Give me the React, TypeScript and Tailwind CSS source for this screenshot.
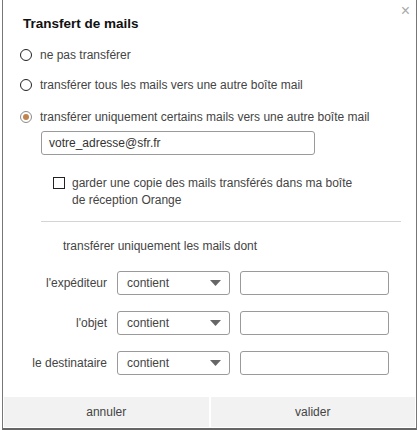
import React from "react";

const font = { fontFamily: '"Liberation Sans", Arial, sans-serif' };

function Radio({ checked = false }: { checked?: boolean }) {
  return (
    <span
      className={`flex h-[12px] w-[12px] shrink-0 items-center justify-center rounded-full border ${
        checked ? "border-[#8a8a8a]" : "border-[#222]"
      } bg-white`}
    >
      {checked && <span className="h-[6px] w-[6px] rounded-full bg-[#c0844f]" />}
    </span>
  );
}

function Select() {
  return (
    <div className="flex h-[24px] w-[113px] items-center justify-between rounded-[3px] border border-[#9a9a9a] bg-white pl-[9px] pr-[8px] text-[12px] text-[#444]">
      <span>contient</span>
      <svg width="11" height="6" viewBox="0 0 11 6">
        <path d="M0 0 H11 L5.5 6 Z" fill="#666" />
      </svg>
    </div>
  );
}

function FilterRow({ label }: { label: string }) {
  return (
    <div className="flex items-center">
      <span className="w-[84px] text-right text-[12px] text-[#444]">{label}</span>
      <div className="ml-[10px]">
        <Select />
      </div>
      <div className="ml-[10px] h-[24px] w-[149px] rounded-[3px] border border-[#9a9a9a] bg-white" />
    </div>
  );
}

export default function App() {
  return (
    <div className="h-[430px] w-[420px] bg-white" style={font}>
      <div className="relative ml-[2px] flex h-[430px] w-[415px] flex-col border-x border-b-2 border-x-[#777] border-b-[#666] bg-white">
        <span className="absolute right-[6px] top-[3px] text-[16px] leading-none text-[#aaa]">×</span>

        <div className="pl-[17px]">
          <h1 className="ml-[3px] mt-[15px] text-[13.5px] font-bold leading-[18px] text-[#111]">Transfert de mails</h1>

          <div className="mt-[14px] flex items-center gap-[8px] text-[12px] leading-[16px] text-[#444]">
            <Radio />
            <span>ne pas transférer</span>
          </div>
          <div className="mt-[14px] flex items-center gap-[8px] text-[12px] leading-[16px] text-[#444]">
            <Radio />
            <span>transférer tous les mails vers une autre boîte mail</span>
          </div>
          <div className="mt-[16px] flex items-center gap-[8px] text-[12px] leading-[16px] text-[#444]">
            <Radio checked />
            <span>transférer uniquement certains mails vers une autre boîte mail</span>
          </div>

          <div className="ml-[21px] mt-[6px] flex h-[24px] w-[274px] items-center rounded-[3px] border border-[#9a9a9a] bg-white pl-[7px] text-[12px] text-[#333]">
            votre_adresse@sfr.fr
          </div>

          <div className="ml-[33px] mt-[20px] flex items-start gap-[7px] text-[12px] leading-[17px] text-[#444]">
            <span className="mt-[2px] h-[12px] w-[12px] shrink-0 border border-[#222] bg-white" />
            <span className="w-[285px]">
              garder une copie des mails transférés dans ma boîte de réception Orange
            </span>
          </div>

          <div className="ml-[21px] mt-[12px] h-px w-[360px] bg-[#d4d4d4]" />

          <p className="ml-[43px] mt-[16px] text-[12px] leading-[16px] text-[#444]">
            transférer uniquement les mails dont
          </p>

          <div className="mt-[17px] flex flex-col gap-[16px] pl-[3px]">
            <FilterRow label="l'expéditeur" />
            <FilterRow label="l'objet" />
            <FilterRow label="le destinataire" />
          </div>
        </div>

        <div className="mt-auto flex gap-[2px] px-[1px] pb-[1px]">
          <button className="h-[30px] flex-1 bg-[#f2f2f2] text-[12px] text-[#444]">annuler</button>
          <button className="h-[30px] flex-1 bg-[#f2f2f2] text-[12px] text-[#444]">valider</button>
        </div>
      </div>
    </div>
  );
}
